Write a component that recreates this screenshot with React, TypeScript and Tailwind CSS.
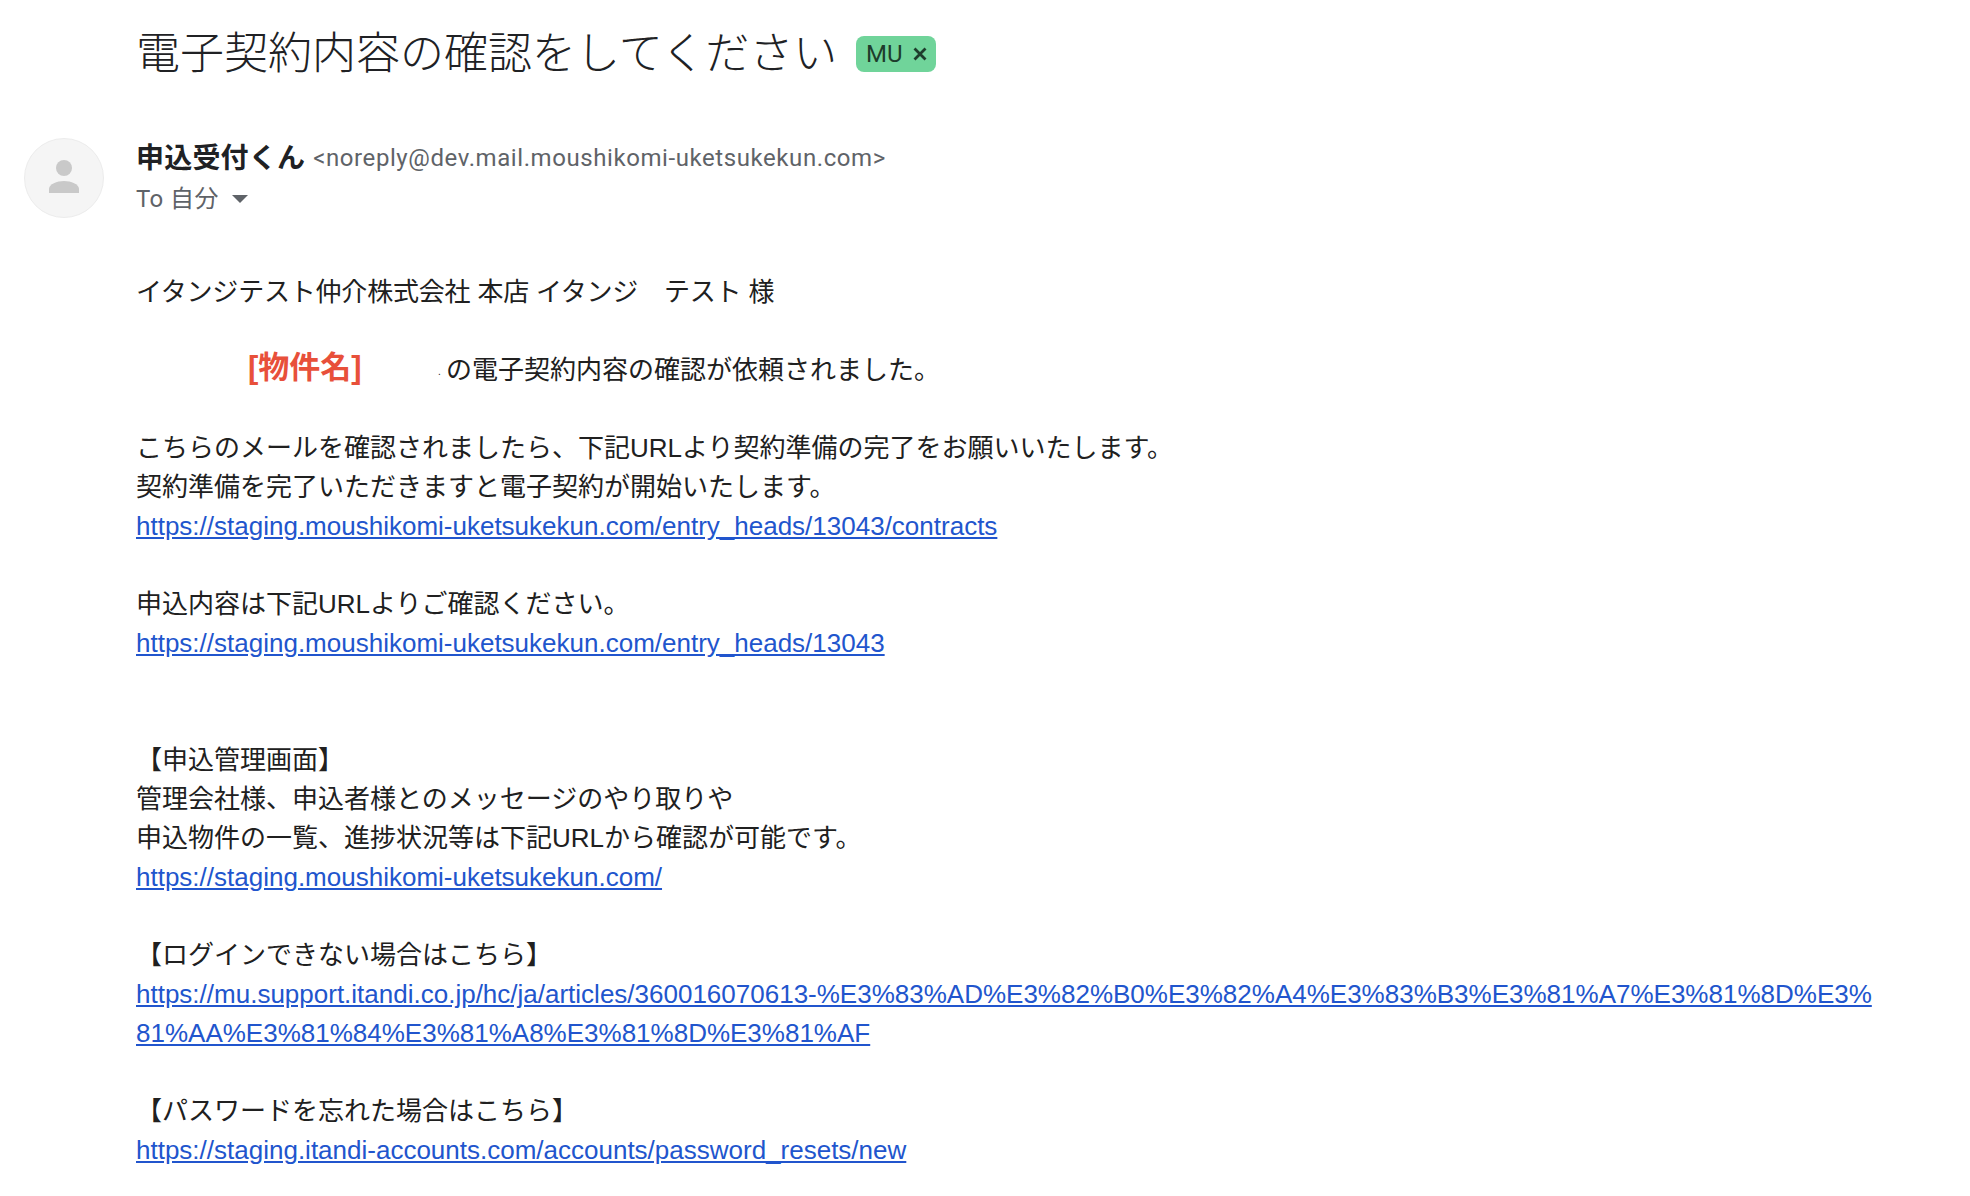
const LINK = 'text-[#2155cd] underline [font-family:"Liberation_Sans",sans-serif]'

function Url({ href }: { href: string }) {
  return (
    <a href={href} className={LINK}>
      {href}
    </a>
  )
}

function Blank() {
  return <div className="h-[39px]" />
}

function Line({ children }: { children: React.ReactNode }) {
  return <div className="h-[39px] whitespace-pre">{children}</div>
}

export default function App() {
  return (
    <div className="h-[1196px] overflow-hidden bg-white text-[#202020] [font-family:'Liberation_Sans','Noto_Sans_CJK_JP',sans-serif]">
      <div className="flex items-center gap-[19px] pt-[25px] pl-[136px]">
        <h1 className="text-[44px] leading-[58px] font-light text-[#202124]">
          電子契約内容の確認をしてください
        </h1>
        <span className="flex h-[36px] w-[80px] items-center justify-center gap-[10px] rounded-[8px] bg-[#70d49a] text-[24px] text-[#1e3d2c] [font-family:Roboto,sans-serif]">
          MU
          <svg viewBox="0 0 14 14" className="size-[14px]" fill="none" stroke="#1e3d2c" strokeWidth="2.8">
            <path d="M1.500 1.500l11 11M12.500 1.500l-11 11" />
          </svg>
        </span>
      </div>

      <div className="mt-[54px] flex">
        <div className="mt-[1px] ml-[24px] flex size-[80px] items-center justify-center rounded-full border border-[#ececec] bg-[#f5f5f5]">
          <svg viewBox="0 0 30 33" className="mb-[3px] h-[33px] w-[30px]" fill="#c9c9c9">
            <circle cx="15" cy="8" r="8" />
            <path d="M0 33v-4c0-5 8-8 15-8s15 3 15 8v4z" />
          </svg>
        </div>
        <div className="ml-[32px]">
          <div className="flex items-center gap-[8px] leading-[38px]">
            <span className="pb-[2px] text-[28px] tracking-[0.2px] font-bold text-[#202124] [font-family:'Noto_Sans_CJK_JP',sans-serif]">申込受付くん</span>
            <span className="pt-[2px] text-[24px] tracking-[0.58px] text-[#5f6368] [font-family:Roboto,sans-serif]">&lt;noreply@dev.mail.moushikomi-uketsukekun.com&gt;</span>
          </div>
          <div className="mt-[4px] flex items-center gap-[13px] text-[24px] leading-[36px] tracking-[0.4px] text-[#5f6368] [font-family:Roboto,'Noto_Sans_CJK_JP',sans-serif]">
            <span>To 自分</span>
            <span className="h-0 w-0 border-x-[8px] border-t-[8px] border-x-transparent border-t-[#5f6368]" />
          </div>
        </div>
      </div>

      <div className="mt-[55px] w-[1878px] pl-[136px] text-[26px] leading-[39px]">
        <div className="h-[39px] tracking-[-0.2px] whitespace-pre">イタンジテスト仲介株式会社 本店 イタンジ　テスト 様</div>
        <Blank />
        <div className="flex h-[39px] items-start">
          <span className="ml-[112px] w-[190px] text-[31px] leading-[34px] font-bold text-[#e8503a]">[物件名]</span>
          <span className="w-[8px] text-[10px] leading-[42px]">.</span>
          <span className="leading-[38px]">の電子契約内容の確認が依頼されました。</span>
        </div>
        <Blank />
        <Line>こちらのメールを確認されましたら、下記URLより契約準備の完了をお願いいたします。</Line>
        <Line>契約準備を完了いただきますと電子契約が開始いたします。</Line>
        <Line>
          <Url href="https://staging.moushikomi-uketsukekun.com/entry_heads/13043/contracts" />
        </Line>
        <Blank />
        <Line>申込内容は下記URLよりご確認ください。</Line>
        <Line>
          <Url href="https://staging.moushikomi-uketsukekun.com/entry_heads/13043" />
        </Line>
        <Blank />
        <Blank />
        <Line>【申込管理画面】</Line>
        <Line>管理会社様、申込者様とのメッセージのやり取りや</Line>
        <Line>申込物件の一覧、進捗状況等は下記URLから確認が可能です。</Line>
        <Line>
          <Url href="https://staging.moushikomi-uketsukekun.com/" />
        </Line>
        <Blank />
        <Line>【ログインできない場合はこちら】</Line>
        <div className="break-all">
          <Url href="https://mu.support.itandi.co.jp/hc/ja/articles/360016070613-%E3%83%AD%E3%82%B0%E3%82%A4%E3%83%B3%E3%81%A7%E3%81%8D%E3%81%AA%E3%81%84%E3%81%A8%E3%81%8D%E3%81%AF" />
        </div>
        <Blank />
        <Line>【パスワードを忘れた場合はこちら】</Line>
        <Line>
          <Url href="https://staging.itandi-accounts.com/accounts/password_resets/new" />
        </Line>
      </div>
    </div>
  )
}
